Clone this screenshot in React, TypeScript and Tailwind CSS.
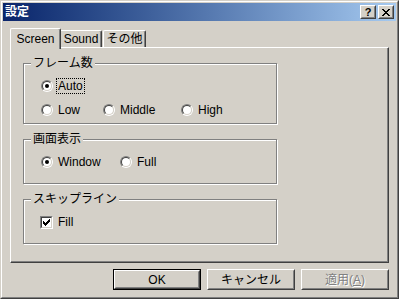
import React from "react";

const font = { fontFamily: '"Liberation Sans", "Noto Sans CJK JP", sans-serif' };

function Radio({ checked }: { checked?: boolean }) {
  return (
    <span className="block w-[12px] h-[12px] shrink-0 rounded-full border border-t-[#808080] border-l-[#808080] border-b-white border-r-white">
      <span className="flex items-center justify-center w-[10px] h-[10px] rounded-full border border-t-[#404040] border-l-[#404040] border-b-[#d4d0c8] border-r-[#d4d0c8] bg-white">
        {checked && <span className="block w-[4px] h-[4px] rounded-full bg-black" />}
      </span>
    </span>
  );
}

function Checkbox({ checked }: { checked?: boolean }) {
  return (
    <span className="block w-[13px] h-[13px] shrink-0 border border-t-[#808080] border-l-[#808080] border-b-white border-r-white">
      <span className="flex items-center justify-center w-[11px] h-[11px] border border-t-[#404040] border-l-[#404040] border-b-[#d4d0c8] border-r-[#d4d0c8] bg-white">
        {checked && (
          <svg width="7" height="7" viewBox="0 0 7 7" shapeRendering="crispEdges">
            <path d="M0 2h1v3H0zM1 3h1v3H1zM2 4h1v3H2zM3 3h1v3H3zM4 2h1v3H4zM5 1h1v3H5zM6 0h1v3H6z" fill="#000" />
          </svg>
        )}
      </span>
    </span>
  );
}

function Option({
  label,
  checked,
  focus,
  width,
}: {
  label: string;
  checked?: boolean;
  focus?: boolean;
  width: string;
}) {
  return (
    <div className={`flex items-center h-[16px] ${width}`}>
      <Radio checked={checked} />
      <span
        className={`ml-[4px] px-[1px] leading-[14px] text-[12px] text-black whitespace-nowrap ${
          focus ? "outline outline-1 outline-dotted outline-black" : ""
        }`}
      >
        {label}
      </span>
    </div>
  );
}

function Group({
  title,
  children,
  pb,
}: {
  title: string;
  children: React.ReactNode;
  pb: string;
}) {
  return (
    <div
      className={`relative mt-[15px] ml-[12px] w-[254px] border border-[#808080] shadow-[inset_1px_1px_0_#fff,1px_1px_0_#fff] pt-[14px] pl-[17px] ${pb}`}
    >
      <span className="absolute left-[7px] -top-[8px] h-[14px] px-[2px] bg-[#d4d0c8] text-[12px] leading-[14px] text-black whitespace-nowrap">
        {title}
      </span>
      {children}
    </div>
  );
}

function Button({
  children,
  isDefault,
  disabled,
}: {
  children: React.ReactNode;
  isDefault?: boolean;
  disabled?: boolean;
}) {
  return (
    <div className={`flex w-[88px] h-[21px] ${isDefault ? "border border-black" : ""}`}>
      <div className="flex-1 flex border border-t-white border-l-white border-b-[#404040] border-r-[#404040]">
        <div className="flex-1 flex items-center justify-center border border-t-[#d4d0c8] border-l-[#d4d0c8] border-b-[#808080] border-r-[#808080]">
          <span
            className={`text-[12px] leading-[14px] whitespace-nowrap ${
              disabled ? "text-[#808080] [text-shadow:1px_1px_0_#fff]" : "text-black"
            }`}
          >
            {children}
          </span>
        </div>
      </div>
    </div>
  );
}

function CaptionButton({ children }: { children: React.ReactNode }) {
  return (
    <div className="w-[16px] h-[14px] bg-[#d4d0c8] border border-t-white border-l-white border-b-[#404040] border-r-[#404040]">
      <div className="w-full h-full border border-t-[#d4d0c8] border-l-[#d4d0c8] border-b-[#808080] border-r-[#808080] flex items-center justify-center">
        {children}
      </div>
    </div>
  );
}

export default function App() {
  return (
    <div
      className="w-[399px] h-[299px] bg-[#d4d0c8] border border-t-[#d4d0c8] border-l-[#d4d0c8] border-b-[#404040] border-r-[#404040]"
      style={font}
    >
      <div className="w-full h-full border border-t-white border-l-white border-b-[#808080] border-r-[#808080] p-[1px] flex flex-col">
        {/* Title bar */}
        <div className="h-[18px] shrink-0 flex items-center bg-gradient-to-r from-[#0a246a] to-[#a6caf0] pl-[2px] pr-[2px]">
          <span className="text-white font-bold text-[12px] leading-[14px]">設定</span>
          <div className="ml-auto flex gap-[2px]">
            <CaptionButton>
              <span className="text-[11px] font-bold leading-[10px] text-black">?</span>
            </CaptionButton>
            <CaptionButton>
              <svg width="8" height="7" viewBox="0 0 8 7" shapeRendering="crispEdges">
                <path
                  d="M0 0h2v1H0zM6 0h2v1H6zM1 1h2v1H1zM5 1h2v1H5zM2 2h4v1H2zM3 3h2v1H3zM2 4h4v1H2zM1 5h2v1H1zM5 5h2v1H5zM0 6h2v1H0zM6 6h2v1H6z"
                  fill="#000"
                />
              </svg>
            </CaptionButton>
          </div>
        </div>

        {/* Tabs */}
        <div className="mt-[7px] ml-[7px] flex items-end h-[19px]">
          <div className="relative z-10 self-start w-[51px] h-[21px] bg-[#d4d0c8] border-l border-t border-l-white border-t-white border-r border-r-[#404040] rounded-tl-[2px] rounded-tr-[2px] shadow-[inset_-1px_0_0_#808080] flex justify-center pt-[3px]">
            <span className="text-[12px] leading-[14px] text-black">Screen</span>
          </div>
          <div className="w-[41px] h-[17px] border-t border-t-white border-r border-r-[#404040] rounded-tr-[2px] shadow-[inset_-1px_0_0_#808080] flex justify-center pt-[1px]">
            <span className="text-[12px] leading-[14px] text-black whitespace-nowrap">Sound</span>
          </div>
          <div className="ml-[1px] w-[43px] h-[17px] border-l border-l-white border-t border-t-white border-r border-r-[#404040] rounded-tl-[2px] rounded-tr-[2px] shadow-[inset_-1px_0_0_#808080] flex justify-center pt-[1px]">
            <span className="text-[12px] leading-[14px] text-black whitespace-nowrap">その他</span>
          </div>
        </div>

        {/* Panel */}
        <div className="ml-[7px] w-[379px] h-[216px] border-l border-t border-l-white border-t-white border-r border-b border-r-[#404040] border-b-[#404040] shadow-[inset_-1px_-1px_0_#808080] flex flex-col">
          <Group title="フレーム数" pb="pb-[5px]">
            <Option label="Auto" checked focus width="w-[62px]" />
            <div className="flex mt-[8px]">
              <Option label="Low" width="w-[62px]" />
              <Option label="Middle" width="w-[78px]" />
              <Option label="High" width="w-[60px]" />
            </div>
          </Group>
          <Group title="画面表示" pb="pb-[13px]">
            <div className="flex">
              <Option label="Window" checked width="w-[79px]" />
              <Option label="Full" width="w-[60px]" />
            </div>
          </Group>
          <Group title="スキップライン" pb="pb-[13px]">
            <div className="flex items-center h-[16px] -ml-[1px]">
              <Checkbox checked />
              <span className="ml-[5px] text-[12px] leading-[14px] text-black">Fill</span>
            </div>
          </Group>
        </div>

        {/* Buttons */}
        <div className="mt-[6px] mr-[7px] flex justify-end gap-[6px]">
          <Button isDefault>OK</Button>
          <Button>キャンセル</Button>
          <Button disabled>
            適用(<span className="underline">A</span>)
          </Button>
        </div>
      </div>
    </div>
  );
}
